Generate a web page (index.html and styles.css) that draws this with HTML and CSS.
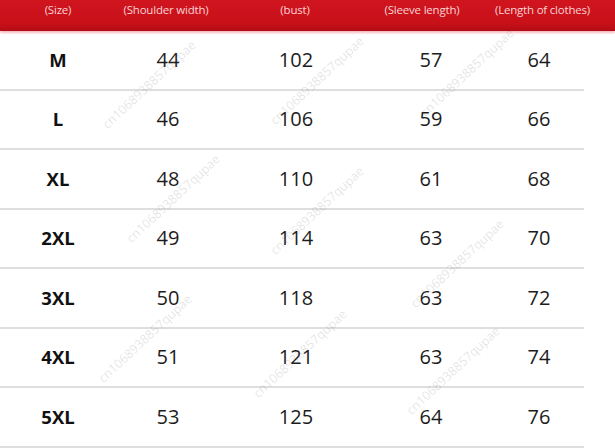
FILE: index.html
```html
<!DOCTYPE html>
<html lang="en">
<head>
<meta charset="utf-8">
<title>Size chart</title>
<link rel="stylesheet" href="styles.css">
</head>
<body>
<div class="chart">
  <div class="head">
    <div class="hcell">(Size)</div>
    <div class="hcell">(Shoulder width)</div>
    <div class="hcell">(bust)</div>
    <div class="hcell">(Sleeve length)</div>
    <div class="hcell">(Length of clothes)</div>
  </div>
  <div class="rows">
    <div class="row"><div class="size">M</div><div class="c2">44</div><div class="c3">102</div><div class="c4">57</div><div class="c5">64</div></div>
    <div class="row"><div class="size">L</div><div class="c2">46</div><div class="c3">106</div><div class="c4">59</div><div class="c5">66</div></div>
    <div class="row"><div class="size">XL</div><div class="c2">48</div><div class="c3">110</div><div class="c4">61</div><div class="c5">68</div></div>
    <div class="row"><div class="size">2XL</div><div class="c2">49</div><div class="c3">114</div><div class="c4">63</div><div class="c5">70</div></div>
    <div class="row"><div class="size">3XL</div><div class="c2">50</div><div class="c3">118</div><div class="c4">63</div><div class="c5">72</div></div>
    <div class="row"><div class="size">4XL</div><div class="c2">51</div><div class="c3">121</div><div class="c4">63</div><div class="c5">74</div></div>
    <div class="row"><div class="size">5XL</div><div class="c2">53</div><div class="c3">125</div><div class="c4">64</div><div class="c5">76</div></div>
  </div>
  <div class="marks" aria-hidden="true">
    <span class="wm w1">cn1068938857qupae</span>
    <span class="wm w2">cn1068938857qupae</span>
    <span class="wm w3">cn1068938857qupae</span>
    <span class="wm w4">cn1068938857qupae</span>
    <span class="wm w5">cn1068938857qupae</span>
    <span class="wm w6">cn1068938857qupae</span>
    <span class="wm w7">cn1068938857qupae</span>
    <span class="wm w8">cn1068938857qupae</span>
    <span class="wm w9">cn1068938857qupae</span>
  </div>
</div>
</body>
</html>
```
FILE: styles.css
```css
html, body {
  margin: 0;
  padding: 0;
  background: #ffffff;
}
body {
  font-family: "Open Sans", "Noto Sans", sans-serif;
  width: 615px;
  height: 448px;
  overflow: hidden;
}
.chart {
  position: relative;
  width: 615px;
  height: 448px;
  overflow: hidden;
}
.head {
  display: grid;
  grid-template-columns: 116px 100px 158px 96px 1fr;
  height: 31px;
  background: linear-gradient(#d0151f 0%, #c81019 75%, #b30c14 100%);
  box-shadow: 0 2px 2px rgba(220, 60, 70, 0.35);
  position: relative;
  z-index: 1;
}
.hcell {
  text-align: center;
  color: #f8d2d3;
  font-size: 11.5px;
  line-height: 20px;
  letter-spacing: -0.2px;
  white-space: nowrap;
}
.rows {
  width: 584px;
}
.row {
  display: grid;
  grid-template-columns: 116px 104px 152px 118px 1fr;
  align-items: center;
  height: 59.5px;
  box-sizing: border-box;
  border-bottom: 2px solid #dedede;
  color: #1c1c1c;
  font-size: 20px;
}
.row > div {
  text-align: center;
  padding-bottom: 1px;
}
.row .c5 {
  padding-left: 4px;
}
.size {
  font-weight: 700;
  font-size: 18.5px;
  color: #111;
}
.marks {
  position: absolute;
  inset: 0;
  pointer-events: none;
}
.wm {
  position: absolute;
  font-size: 12.5px;
  color: rgba(120, 120, 120, 0.2);
  transform: rotate(-43deg);
  transform-origin: center;
  white-space: nowrap;
}
.w1 { left: 88px; top: 76px; }
.w2 { left: 256px; top: 72px; }
.w3 { left: 406px; top: 64px; }
.w4 { left: 112px; top: 190px; }
.w5 { left: 256px; top: 202px; }
.w6 { left: 396px; top: 255px; }
.w7 { left: 84px; top: 330px; }
.w8 { left: 239px; top: 345px; }
.w9 { left: 392px; top: 362px; }
```
